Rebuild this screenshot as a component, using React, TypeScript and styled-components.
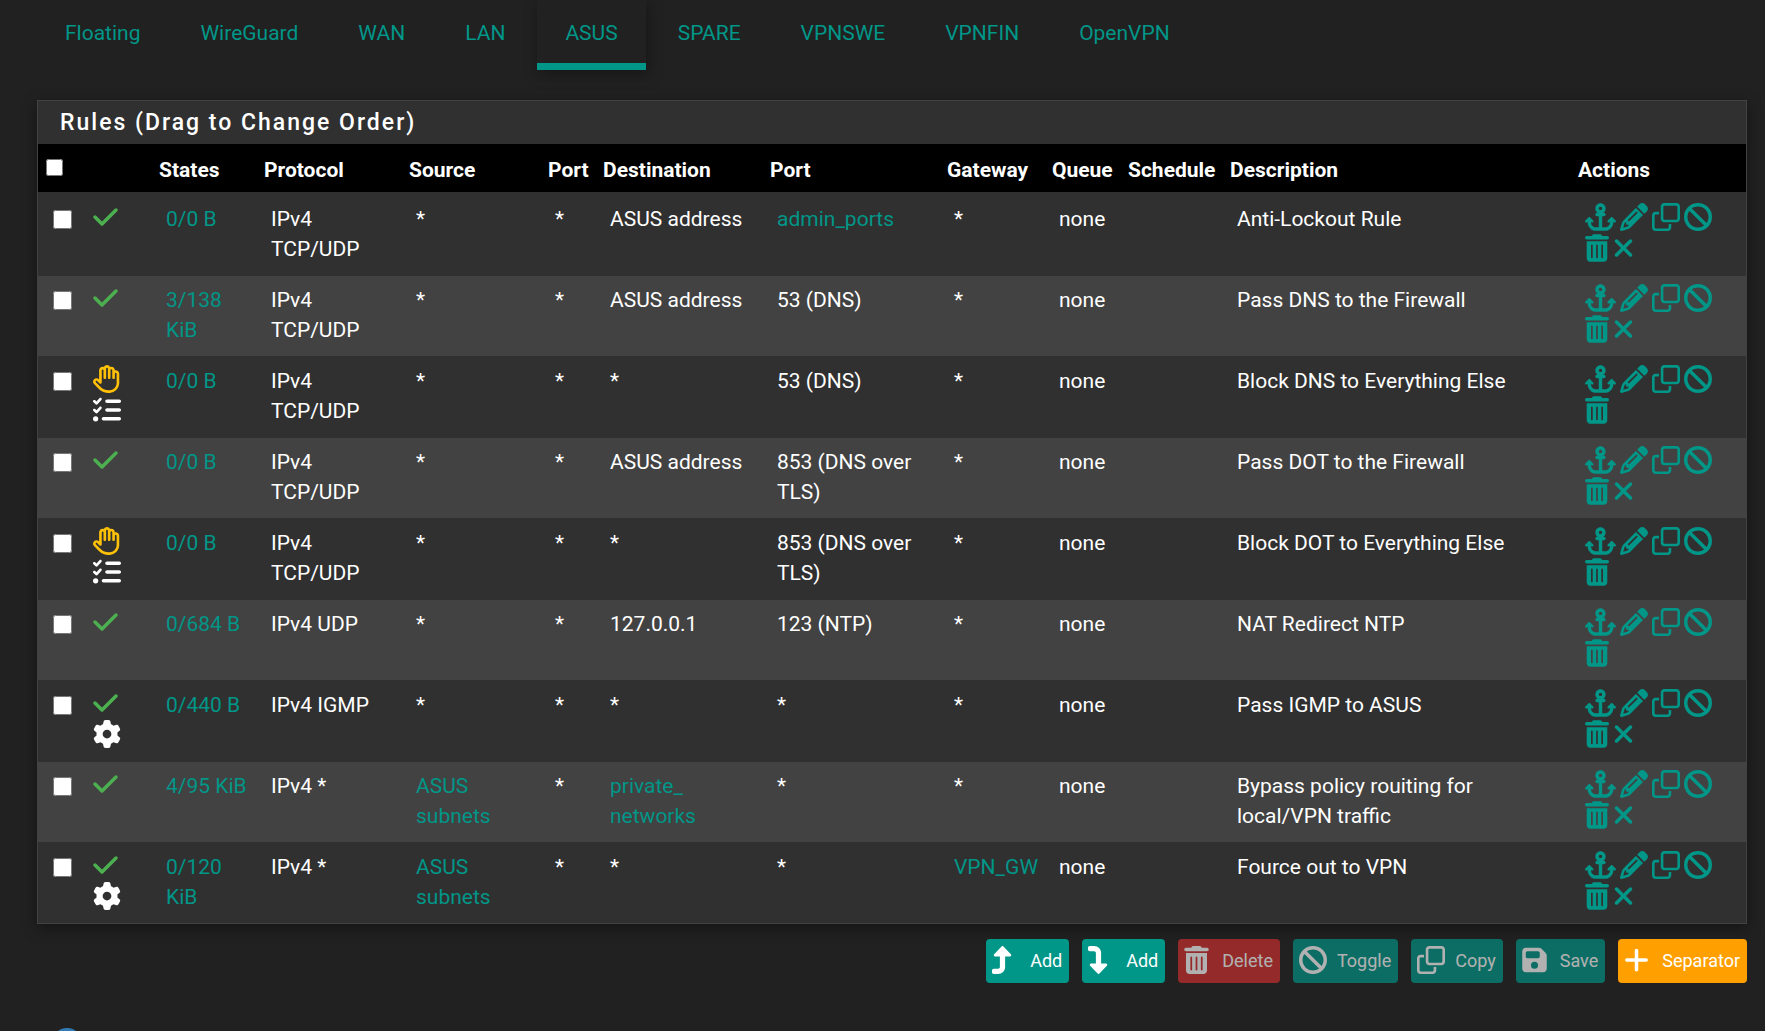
import React from "react";
import styled, { createGlobalStyle, css } from "styled-components";
import {
  FaAnchor,
  FaBan,
  FaCheck,
  FaCircleInfo,
  FaFloppyDisk,
  FaGear,
  FaListCheck,
  FaPencil,
  FaPlus,
  FaRegClone,
  FaRegHand,
  FaTrashCan,
  FaTurnDown,
  FaTurnUp,
  FaXmark,
} from "react-icons/fa6";

const teal = "#009688";

const GlobalStyle = createGlobalStyle`
  *, *::before, *::after { box-sizing: border-box; }
  body {
    margin: 0;
    overflow: hidden;
    background: #212121;
    color: #fff;
    font-family: Roboto, "Liberation Sans", sans-serif;
    font-size: 21px;
    line-height: 30px;
  }
`;

const Page = styled.div`
  display: flex;
  flex-direction: column;
  padding: 0 18px 0 37px;
`;

const Tabs = styled.nav`
  display: flex;
  gap: 4px;
  margin-bottom: 30px;
`;

const Tab = styled.a<{ $active?: boolean }>`
  height: 70px;
  padding: 18px 28px 0;
  color: ${teal};
  text-decoration: none;
  border-bottom: 7px solid transparent;
  ${(p) =>
    p.$active &&
    css`
      border-bottom-color: ${teal};
      box-shadow: 2px 4px 14px rgba(0, 0, 0, 0.35);
    `}
`;

const Panel = styled.section`
  background: #303030;
  border: 1px solid #424242;
  box-shadow: 0 4px 14px rgba(0, 0, 0, 0.4);
`;

const PanelTitle = styled.h2`
  margin: 0;
  padding: 7px 22px 6px;
  font-size: 23px;
  font-weight: 500;
  letter-spacing: 2px;
`;

const RulesTable = styled.table`
  width: 100%;
  table-layout: fixed;
  border-collapse: separate;
  border-spacing: 0;
`;

const Col = styled.col<{ $w?: number }>`
  width: ${(p) => (p.$w ? `${p.$w}px` : "auto")};
`;

const HeadCell = styled.th`
  height: 48px;
  padding: 4px 0 0 8px;
  background: #000;
  text-align: left;
  vertical-align: middle;
  font-weight: 700;
  white-space: nowrap;
`;

const Body = styled.tbody`
  &::before {
    content: "";
    display: block;
    height: 3px;
  }
`;

const Row = styled.tr`
  &:nth-child(even) > td {
    background: #424242;
  }
`;

const Cell = styled.td<{ $icons?: boolean; $right?: number }>`
  height: 81px;
  padding: ${(p) => (p.$icons ? 8 : 9)}px ${(p) => p.$right ?? 4}px 0 15px;
  vertical-align: top;
  border-bottom: 1px solid #303030;
  tr:last-child > & {
    height: 80px;
    border-bottom: 0;
  }
`;

const Check = styled.input<{ $head?: boolean }>`
  display: block;
  width: ${(p) => (p.$head ? 17 : 19)}px;
  height: ${(p) => (p.$head ? 17 : 19)}px;
  margin: ${(p) => (p.$head ? "0 0 6px" : "6px 0 0")};
`;

const TextLink = styled.a`
  color: ${teal};
  text-decoration: none;
`;

const IconSet = styled.div`
  display: flex;
  flex-wrap: wrap;
  gap: 3px 4px;
`;

const StatusStack = styled.div`
  display: flex;
  flex-direction: column;
  align-items: flex-start;
  gap: 3px;
`;

const Glyph = styled.span<{ $color: string; $w?: number }>`
  display: flex;
  color: ${(p) => p.$color};
  svg {
    width: ${(p) => p.$w ?? 28}px;
    height: 28px;
  }
`;

const IconButton = styled.button<{ $w?: number }>`
  display: flex;
  padding: 0;
  border: 0;
  background: none;
  color: ${teal};
  cursor: pointer;
  svg {
    width: ${(p) => p.$w ?? 28}px;
    height: 28px;
  }
`;

const ButtonBar = styled.div`
  display: flex;
  justify-content: flex-end;
  gap: 13px;
  margin: 15px 0 45px;
`;

const ActionButton = styled.button<{ $bg: string }>`
  display: flex;
  align-items: center;
  height: 44px;
  padding: 0 7px 2px 6px;
  border: 0;
  border-radius: 4px;
  background: ${(p) => p.$bg};
  color: #fff;
  font-family: inherit;
  font-size: 18px;
  &:disabled {
    opacity: 0.65;
  }
`;

const ButtonIcon = styled.span<{ $w: number }>`
  display: flex;
  width: 38px;
  svg {
    width: ${(p) => p.$w}px;
    height: 28px;
  }
`;

const InfoButton = styled.button`
  display: flex;
  align-self: flex-start;
  margin-left: 15px;
  padding: 0;
  border: 0;
  background: none;
  color: #337ab7;
  font-size: 30px;
`;

type Rule = {
  states: string;
  protocol: string;
  source?: string;
  destination?: React.ReactNode;
  port?: React.ReactNode;
  gateway?: React.ReactNode;
  description: string;
  block?: boolean;
  advanced?: boolean;
  keepStates?: boolean;
};

const link = (text: React.ReactNode) => <TextLink href="#">{text}</TextLink>;

const rules: Rule[] = [
  { states: "0/0 B", protocol: "IPv4 TCP/UDP", destination: "ASUS address", port: link("admin_ports"), description: "Anti-Lockout Rule" },
  { states: "3/138 KiB", protocol: "IPv4 TCP/UDP", destination: "ASUS address", port: "53 (DNS)", description: "Pass DNS to the Firewall" },
  { states: "0/0 B", protocol: "IPv4 TCP/UDP", port: "53 (DNS)", description: "Block DNS to Everything Else", block: true },
  { states: "0/0 B", protocol: "IPv4 TCP/UDP", destination: "ASUS address", port: "853 (DNS over TLS)", description: "Pass DOT to the Firewall" },
  { states: "0/0 B", protocol: "IPv4 TCP/UDP", port: "853 (DNS over TLS)", description: "Block DOT to Everything Else", block: true },
  { states: "0/684 B", protocol: "IPv4 UDP", destination: "127.0.0.1", port: "123 (NTP)", description: "NAT Redirect NTP", keepStates: true },
  { states: "0/440 B", protocol: "IPv4 IGMP", description: "Pass IGMP to ASUS", advanced: true },
  {
    states: "4/95 KiB",
    protocol: "IPv4 *",
    source: "ASUS subnets",
    destination: link(<>private_<wbr />networks</>),
    description: "Bypass policy rouiting for local/VPN traffic",
  },
  { states: "0/120 KiB", protocol: "IPv4 *", source: "ASUS subnets", gateway: link("VPN_GW"), description: "Fource out to VPN", advanced: true },
];

const tabs = ["Floating", "WireGuard", "WAN", "LAN", "ASUS", "SPARE", "VPNSWE", "VPNFIN", "OpenVPN"];

const headings = ["", "States", "Protocol", "Source", "Port", "Destination", "Port", "Gateway", "Queue", "Schedule", "Description", "Actions"];

const columns = [40, 73, 105, 145, 139, 55, 167, 177, 105, 76, 102, undefined, 176];

const buttons = [
  { label: "Add", title: "Add rule to the top", bg: teal, icon: <FaTurnUp />, iconWidth: 21 },
  { label: "Add", title: "Add rule to the end", bg: teal, icon: <FaTurnDown />, iconWidth: 21 },
  { label: "Delete", bg: "#d32f2f", icon: <FaTrashCan />, iconWidth: 25, disabled: true },
  { label: "Toggle", bg: teal, icon: <FaBan />, iconWidth: 28, disabled: true },
  { label: "Copy", bg: teal, icon: <FaRegClone />, iconWidth: 28, disabled: true },
  { label: "Save", bg: teal, icon: <FaFloppyDisk />, iconWidth: 25, disabled: true },
  { label: "Separator", bg: "#ffa000", icon: <FaPlus />, iconWidth: 25 },
];

function RuleRow({ rule }: { rule: Rule }) {
  return (
    <Row>
      <Cell>
        <Check type="checkbox" aria-label={`Select ${rule.description}`} />
      </Cell>
      <Cell $icons>
        <StatusStack>
          {rule.block ? (
            <Glyph $color="#ffc107"><FaRegHand /></Glyph>
          ) : (
            <Glyph $color="#4caf50" $w={25}><FaCheck /></Glyph>
          )}
          {rule.block && <Glyph $color="#fff"><FaListCheck /></Glyph>}
          {rule.advanced && <Glyph $color="#fff"><FaGear /></Glyph>}
        </StatusStack>
      </Cell>
      <Cell>{link(rule.states)}</Cell>
      <Cell>{rule.protocol}</Cell>
      <Cell>{rule.source ? link(rule.source) : "*"}</Cell>
      <Cell>*</Cell>
      <Cell>{rule.destination ?? "*"}</Cell>
      <Cell>{rule.port ?? "*"}</Cell>
      <Cell>{rule.gateway ?? "*"}</Cell>
      <Cell>none</Cell>
      <Cell />
      <Cell $right={60}>{rule.description}</Cell>
      <Cell $icons $right={16}>
        <IconSet>
          <IconButton aria-label="Move" $w={31}><FaAnchor /></IconButton>
          <IconButton aria-label="Edit"><FaPencil /></IconButton>
          <IconButton aria-label="Copy"><FaRegClone /></IconButton>
          <IconButton aria-label="Disable"><FaBan /></IconButton>
          <IconButton aria-label="Delete" $w={24}><FaTrashCan /></IconButton>
          {!rule.block && !rule.keepStates && (
            <IconButton aria-label="Reset states" $w={21}><FaXmark /></IconButton>
          )}
        </IconSet>
      </Cell>
    </Row>
  );
}

export default function App() {
  return (
    <>
      <GlobalStyle />
      <Page>
        <Tabs>
          {tabs.map((name) => (
            <Tab key={name} href="#" $active={name === "ASUS"}>{name}</Tab>
          ))}
        </Tabs>
        <Panel>
          <PanelTitle>Rules (Drag to Change Order)</PanelTitle>
          <RulesTable>
            <colgroup>
              {columns.map((w, i) => <Col key={i} $w={w} />)}
            </colgroup>
            <thead>
              <tr>
                <HeadCell>
                  <Check $head type="checkbox" aria-label="Select all rules" />
                </HeadCell>
                {headings.map((h, i) => <HeadCell key={i}>{h}</HeadCell>)}
              </tr>
            </thead>
            <Body>
              {rules.map((rule) => <RuleRow key={rule.description} rule={rule} />)}
            </Body>
          </RulesTable>
        </Panel>
        <ButtonBar>
          {buttons.map((b, i) => (
            <ActionButton key={i} $bg={b.bg} title={b.title} disabled={b.disabled}>
              <ButtonIcon $w={b.iconWidth}>{b.icon}</ButtonIcon>
              {b.label}
            </ActionButton>
          ))}
        </ButtonBar>
        <InfoButton aria-label="Information"><FaCircleInfo /></InfoButton>
      </Page>
    </>
  );
}
